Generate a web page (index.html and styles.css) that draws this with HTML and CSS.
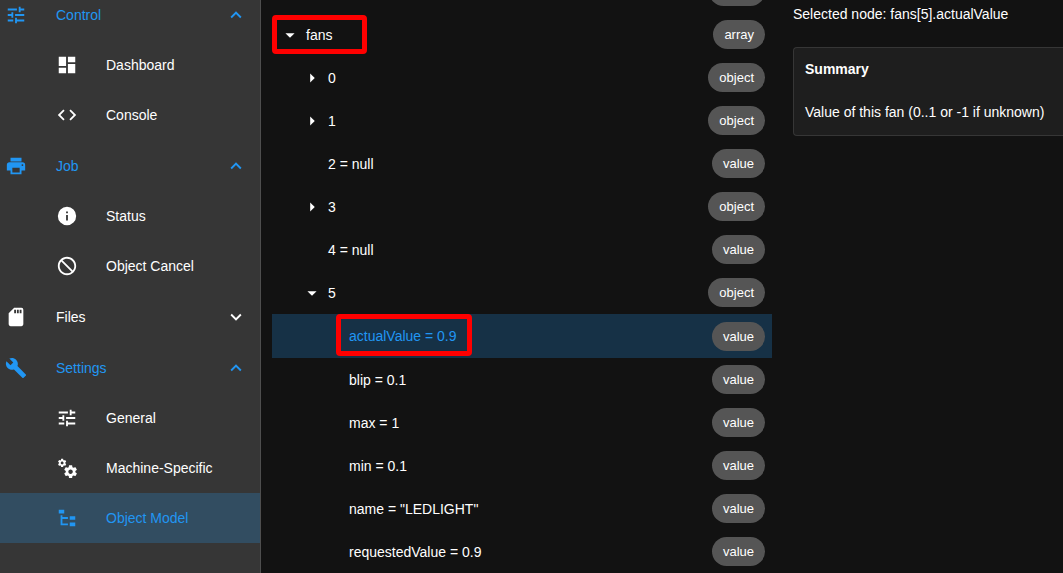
FILE: index.html
```html
<!DOCTYPE html>
<html lang="en">
<head>
<meta charset="utf-8">
<title>Object Model</title>
<link rel="stylesheet" href="styles.css">
</head>
<body>
<svg class="sprite" aria-hidden="true">
  <symbol id="tune" viewBox="0 0 24 24"><path d="M3,17V19H9V17H3M3,5V7H13V5H3M13,21V19H21V17H13V15H11V21H13M7,9V11H3V13H7V15H9V9H7M21,13V11H11V13H21M15,9H17V7H21V5H17V3H15V9Z"/></symbol>
  <symbol id="dashboard" viewBox="0 0 24 24"><path d="M13,3V9H21V3M13,21H21V11H13M3,21H11V15H3M3,13H11V3H3V13Z"/></symbol>
  <symbol id="code" viewBox="0 0 24 24"><path d="M14.6,16.6L19.2,12L14.6,7.4L16,6L22,12L16,18L14.6,16.6M9.4,16.6L4.8,12L9.4,7.4L8,6L2,12L8,18L9.4,16.6Z"/></symbol>
  <symbol id="printer" viewBox="0 0 24 24"><path d="M18,3H6V7H18M19,12A1,1 0 0,1 18,11A1,1 0 0,1 19,10A1,1 0 0,1 20,11A1,1 0 0,1 19,12M16,19H8V14H16M19,8H5A3,3 0 0,0 2,11V17H6V21H18V17H22V11A3,3 0 0,0 19,8Z"/></symbol>
  <symbol id="info" viewBox="0 0 24 24"><path d="M13,9H11V7H13M13,17H11V11H13M12,2A10,10 0 0,0 2,12A10,10 0 0,0 12,22A10,10 0 0,0 22,12A10,10 0 0,0 12,2Z"/></symbol>
  <symbol id="cancel" viewBox="0 0 24 24"><path d="M12,2C17.5,2 22,6.5 22,12C22,17.5 17.5,22 12,22C6.5,22 2,17.5 2,12C2,6.5 6.5,2 12,2M12,4C10.1,4 8.4,4.6 7.1,5.7L18.3,16.9C19.3,15.5 20,13.8 20,12C20,7.6 16.4,4 12,4M16.9,18.3L5.7,7.1C4.6,8.4 4,10.1 4,12C4,16.4 7.6,20 12,20C13.9,20 15.6,19.4 16.9,18.3Z"/></symbol>
  <symbol id="sd" viewBox="0 0 24 24"><path d="M18,8H16V4H18M15,8H13V4H15M12,8H10V4H12M18,2H10L4,8V20A2,2 0 0,0 6,22H18A2,2 0 0,0 20,20V4A2,2 0 0,0 18,2Z"/></symbol>
  <symbol id="wrench" viewBox="0 0 24 24"><path d="M22.7,19L13.6,9.9C14.5,7.6 14,4.9 12.1,3C10.1,1 7.1,0.6 4.7,1.7L9,6L6,9L1.6,4.7C0.4,7.1 0.9,10.1 2.9,12.1C4.8,14 7.5,14.5 9.8,13.6L18.9,22.7C19.3,23.1 19.9,23.1 20.3,22.7L22.6,20.4C23.1,20 23.1,19.3 22.7,19Z"/></symbol>
  <symbol id="cogs" viewBox="0 0 24 24"><path d="M15.9,18.45C17.25,18.45 18.35,17.35 18.35,16C18.35,14.65 17.25,13.55 15.9,13.55C14.54,13.55 13.45,14.65 13.45,16C13.45,17.35 14.54,18.45 15.9,18.45M21.1,16.68L22.58,17.84C22.71,17.95 22.75,18.13 22.66,18.29L21.26,20.71C21.17,20.86 21,20.92 20.83,20.86L19.09,20.16C18.73,20.44 18.33,20.67 17.91,20.85L17.64,22.7C17.62,22.87 17.47,23 17.3,23H14.5C14.32,23 14.18,22.87 14.15,22.7L13.89,20.85C13.46,20.67 13.07,20.44 12.71,20.16L10.96,20.86C10.81,20.92 10.62,20.86 10.54,20.71L9.14,18.29C9.05,18.13 9.09,17.95 9.22,17.84L10.7,16.68L10.65,16L10.7,15.31L9.22,14.16C9.09,14.05 9.05,13.86 9.14,13.71L10.54,11.29C10.62,11.13 10.81,11.07 10.96,11.13L12.71,11.84C13.07,11.56 13.46,11.32 13.89,11.15L14.15,9.29C14.18,9.13 14.32,9 14.5,9H17.3C17.47,9 17.62,9.13 17.64,9.29L17.91,11.15C18.33,11.32 18.73,11.56 19.09,11.84L20.83,11.13C21,11.07 21.17,11.13 21.26,11.29L22.66,13.71C22.75,13.86 22.71,14.05 22.58,14.16L21.1,15.31L21.15,16L21.1,16.68M6.69,8.07C7.56,8.07 8.26,7.37 8.26,6.5C8.26,5.63 7.56,4.92 6.69,4.92A1.58,1.58 0 0,0 5.11,6.5C5.11,7.37 5.82,8.07 6.69,8.07M10.03,6.94L11,7.68C11.07,7.75 11.09,7.87 11.03,7.97L10.13,9.53C10.08,9.63 9.96,9.67 9.86,9.63L8.74,9.18L8,9.62L7.81,10.81C7.79,10.92 7.7,11 7.59,11H5.79C5.67,11 5.58,10.92 5.56,10.81L5.4,9.62L4.64,9.18L3.52,9.63C3.41,9.67 3.3,9.63 3.24,9.53L2.34,7.97C2.28,7.87 2.31,7.75 2.39,7.68L3.34,6.94L3.31,6.5L3.34,6.06L2.39,5.32C2.31,5.25 2.28,5.13 2.34,5.03L3.24,3.47C3.3,3.37 3.41,3.33 3.52,3.37L4.63,3.82L5.4,3.38L5.56,2.19C5.58,2.08 5.67,2 5.79,2H7.59C7.7,2 7.79,2.08 7.81,2.19L8,3.38L8.74,3.82L9.86,3.37C9.96,3.33 10.08,3.37 10.13,3.47L11.03,5.03C11.09,5.13 11.07,5.25 11,5.32L10.03,6.06L10.06,6.5L10.03,6.94Z"/></symbol>
  <symbol id="tree" viewBox="0 0 24 24"><path d="M3,3H9V7H3V3M15,10H21V14H15V10M15,17H21V21H15V17M13,13H7V18H13V20H5V9H7V11H13V13Z"/></symbol>
  <symbol id="up" viewBox="0 0 24 24"><path d="M7.41,15.41L12,10.83L16.59,15.41L18,14L12,8L6,14L7.41,15.41Z"/></symbol>
  <symbol id="down" viewBox="0 0 24 24"><path d="M7.41,8.58L12,13.17L16.59,8.58L18,10L12,16L6,10L7.41,8.58Z"/></symbol>
  <symbol id="open" viewBox="0 0 24 24"><path d="M7,10L12,15L17,10H7Z"/></symbol>
  <symbol id="closed" viewBox="0 0 24 24"><path d="M10,17L15,12L10,7V17Z"/></symbol>
</svg>
<div class="app">
  <nav class="sidebar">
    <div class="menu">
      <section class="group">
        <button class="item head on"><svg class="icon"><use href="#tune"/></svg><span class="label">Control</span><svg class="icon"><use href="#up"/></svg></button>
        <a class="item sub" href="#"><svg class="icon"><use href="#dashboard"/></svg><span class="label">Dashboard</span></a>
        <a class="item sub" href="#"><svg class="icon"><use href="#code"/></svg><span class="label">Console</span></a>
      </section>
      <section class="group">
        <button class="item head on"><svg class="icon"><use href="#printer"/></svg><span class="label">Job</span><svg class="icon"><use href="#up"/></svg></button>
        <a class="item sub" href="#"><svg class="icon"><use href="#info"/></svg><span class="label">Status</span></a>
        <a class="item sub" href="#"><svg class="icon"><use href="#cancel"/></svg><span class="label">Object Cancel</span></a>
      </section>
      <section class="group">
        <button class="item head"><svg class="icon"><use href="#sd"/></svg><span class="label">Files</span><svg class="icon"><use href="#down"/></svg></button>
      </section>
      <section class="group">
        <button class="item head on"><svg class="icon"><use href="#wrench"/></svg><span class="label">Settings</span><svg class="icon"><use href="#up"/></svg></button>
        <a class="item sub" href="#"><svg class="icon"><use href="#tune"/></svg><span class="label">General</span></a>
        <a class="item sub" href="#"><svg class="icon"><use href="#cogs"/></svg><span class="label">Machine-Specific</span></a>
        <a class="item sub on current" href="#"><svg class="icon"><use href="#tree"/></svg><span class="label">Object Model</span></a>
      </section>
    </div>
  </nav>
  <main class="content">
    <div class="tree">
      <div class="row"><span class="label"></span><span class="chip chip-blank"></span></div>
      <div class="row marked mark-root"><button class="toggle" aria-label="Collapse fans"><svg class="icon"><use href="#open"/></svg></button><span class="label">fans</span><span class="chip">array</span></div>
      <div class="row level1"><button class="toggle" aria-label="Expand 0"><svg class="icon"><use href="#closed"/></svg></button><span class="label">0</span><span class="chip">object</span></div>
      <div class="row level1"><button class="toggle" aria-label="Expand 1"><svg class="icon"><use href="#closed"/></svg></button><span class="label">1</span><span class="chip">object</span></div>
      <div class="row level1"><span class="toggle"></span><span class="label">2 = null</span><span class="chip">value</span></div>
      <div class="row level1"><button class="toggle" aria-label="Expand 3"><svg class="icon"><use href="#closed"/></svg></button><span class="label">3</span><span class="chip">object</span></div>
      <div class="row level1"><span class="toggle"></span><span class="label">4 = null</span><span class="chip">value</span></div>
      <div class="row level1"><button class="toggle" aria-label="Collapse 5"><svg class="icon"><use href="#open"/></svg></button><span class="label">5</span><span class="chip">object</span></div>
      <div class="row level2 selected marked mark-leaf"><span class="toggle"></span><span class="label">actualValue = 0.9</span><span class="chip">value</span></div>
      <div class="row level2"><span class="toggle"></span><span class="label">blip = 0.1</span><span class="chip">value</span></div>
      <div class="row level2"><span class="toggle"></span><span class="label">max = 1</span><span class="chip">value</span></div>
      <div class="row level2"><span class="toggle"></span><span class="label">min = 0.1</span><span class="chip">value</span></div>
      <div class="row level2"><span class="toggle"></span><span class="label">name = "LEDLIGHT"</span><span class="chip">value</span></div>
      <div class="row level2"><span class="toggle"></span><span class="label">requestedValue = 0.9</span><span class="chip">value</span></div>
    </div>
    <aside class="details">
      <p class="path">Selected node: fans[5].actualValue</p>
      <div class="card">
        <h2 class="title">Summary</h2>
        <p class="text">Value of this fan (0..1 or -1 if unknown)</p>
      </div>
    </aside>
  </main>
</div>
</body>
</html>
```
FILE: styles.css
```css
*, *::after { box-sizing: border-box; }
body {
  margin: 0;
  background: #121212;
  color: #fff;
  font-family: "Liberation Sans", Arial, sans-serif;
  font-size: 14px;
  line-height: 22px;
}
button {
  border: 0;
  padding: 0;
  background: none;
  color: inherit;
  font: inherit;
  text-align: left;
}
.sprite { display: none; }
.icon {
  display: block;
  flex: none;
  width: 22px;
  height: 22px;
  fill: currentColor;
}
.label { flex: 1; white-space: nowrap; }

.app {
  display: flex;
  height: 100vh;
  overflow: hidden;
}

.sidebar {
  flex: none;
  width: 261px;
  overflow: hidden;
  background: #363636;
  border-right: 1px solid #4e4e4e;
}
/* The menu is scrolled slightly past its first entry. */
.menu {
  display: flex;
  flex-direction: column;
  gap: 1px;
  margin-top: -10px;
}
.item {
  display: flex;
  align-items: center;
  width: 100%;
  height: 50px;
  color: #fff;
  text-decoration: none;
}
.head { gap: 29px; padding: 0 13px 0 5px; }
.sub { gap: 28px; padding-left: 56px; }
.item.on { color: #2196f3; }
.current { background: #324d61; }

.content {
  flex: 1;
  min-width: 0;
  display: grid;
  grid-template-columns: 50fr 27fr;
  gap: 21px;
  padding-left: 11px;
}

/* The tree is scrolled so that only the foot of its first row shows. */
.tree { margin-top: -30px; }
.row {
  position: relative;
  display: flex;
  align-items: center;
  gap: 5px;
  height: 43px;
  padding: 0 7px;
}
.level1 { padding-left: 29px; }
.level2 { padding-left: 50px; }
.toggle { flex: none; width: 22px; }
.selected { height: 44px; background: #163146; }
.selected .label { color: #2196f3; }
.chip {
  padding: 0 11px;
  border-radius: 15px;
  background: #555;
  font-size: 13px;
  line-height: 29px;
}
.chip-blank { width: 56px; height: 29px; }
.marked::after {
  content: "";
  position: absolute;
  border: 5px solid #f00;
  border-radius: 4px;
}
.mark-root::after { top: 2px; left: 0; width: 95px; height: 39px; }
.mark-leaf::after { top: 0; left: 64px; width: 136px; height: 42px; }

.details { min-width: 0; padding-top: 3px; white-space: nowrap; }
.path { margin: 0 0 22px; }
.card {
  padding: 10px 11px 12px;
  border: 1px solid #363636;
  border-right: 0;
  border-radius: 4px 0 0 4px;
  background: #1e1e1e;
}
.title { margin: 0 0 21px; font-size: 14px; font-weight: 700; }
.text { margin: 0; }
```
